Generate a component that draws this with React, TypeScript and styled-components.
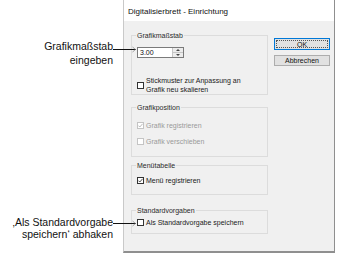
import React from "react";
import styled, { createGlobalStyle } from "styled-components";

const GlobalStyle = createGlobalStyle`
  html, body {
    margin: 0;
    background: #ffffff;
  }
  body {
    font-family: "Liberation Sans", Arial, sans-serif;
  }
`;

const Canvas = styled.div`
  position: relative;
  width: 343px;
  height: 270px;
  display: flex;
  padding-left: 123px;
  box-sizing: border-box;
  overflow: hidden;
`;

const Dialog = styled.div`
  width: 212px;
  height: 253px;
  box-sizing: border-box;
  display: flex;
  flex-direction: column;
  background: #f0f0f0;
  border-left: 1px solid #c9c9c9;
  border-right: 1px solid #8f8f8f;
  border-bottom: 2px solid #8f8f8f;
  font-size: 7px;
  color: #1a1a1a;
`;

const TitleBar = styled.div`
  height: 21px;
  flex: none;
  display: flex;
  align-items: center;
  padding: 2px 0 0 4px;
  box-sizing: border-box;
  background: #ffffff;
  font-size: 8px;
  color: #111;
`;

const Body = styled.div`
  display: flex;
  gap: 6px;
  padding: 0 3px 0 7px;
`;

const LeftColumn = styled.div`
  width: 137px;
  display: flex;
  flex-direction: column;
`;

const Group = styled.div<{ $top: number; $padBottom: number }>`
  margin-top: ${(p) => p.$top}px;
  border: 1px solid #dcdcdc;
  padding: 0 5px ${(p) => p.$padBottom}px 5px;
  display: flex;
  flex-direction: column;
`;

const Legend = styled.div<{ $after: number }>`
  margin: -5px 0 ${(p) => p.$after}px -1px;
  padding: 0 1px;
  width: fit-content;
  line-height: 9px;
  background: #f0f0f0;
  color: #2a2a2a;
`;

const SpinBox = styled.div`
  display: flex;
  width: 47px;
  height: 11px;
  box-sizing: border-box;
  border: 1px solid #7a7a7a;
  background: #ffffff;
`;

const SpinInput = styled.div`
  flex: 1;
  padding-left: 2px;
  line-height: 9px;
  color: #111;
`;

const SpinButtons = styled.div`
  width: 10px;
  display: flex;
  flex-direction: column;
  border-left: 1px solid #c5c5c5;
  background: #ececec;
`;

const SpinHalf = styled.div<{ $down?: boolean }>`
  flex: 1;
  display: flex;
  align-items: center;
  justify-content: center;
  border-top: ${(p) => (p.$down ? "1px solid #c5c5c5" : "none")};
`;

const CheckRow = styled.div<{ $gap?: number }>`
  display: flex;
  align-items: center;
  gap: 2px;
  margin-top: ${(p) => p.$gap ?? 0}px;
`;

const CheckBox = styled.span<{ $disabled?: boolean }>`
  width: 7px;
  height: 7px;
  flex: none;
  box-sizing: border-box;
  border: 1px solid ${(p) => (p.$disabled ? "#c4c4c4" : "#333333")};
  background: #ffffff;
  display: flex;
  align-items: center;
  justify-content: center;
`;

const CheckLabel = styled.span<{ $disabled?: boolean }>`
  line-height: 9px;
  color: ${(p) => (p.$disabled ? "#9a9a9a" : "#1a1a1a")};
`;

const ButtonColumn = styled.div`
  width: 56px;
  padding-top: 17px;
  display: flex;
  flex-direction: column;
  gap: 5px;
`;

const DialogButton = styled.div<{ $default?: boolean }>`
  height: ${(p) => (p.$default ? 12 : 11)}px;
  box-sizing: border-box;
  display: flex;
  align-items: center;
  justify-content: center;
  background: #e1e1e1;
  border: 1px solid ${(p) => (p.$default ? "#0078d7" : "#adadad")};
  color: #111;
  position: relative;
  outline: ${(p) => (p.$default ? "1px dotted #555" : "none")};
  outline-offset: -3px;
`;

const Callout = styled.div<{ $top: number }>`
  position: absolute;
  left: 0;
  top: ${(p) => p.$top}px;
  width: 137px;
  display: flex;
  align-items: flex-start;
  font-family: "Liberation Sans", Arial, sans-serif;
  font-size: 10.5px;
  color: #111;
`;

const CalloutText = styled.div<{ $lineHeight: number }>`
  width: 113px;
  flex: none;
  text-align: right;
  line-height: ${(p) => p.$lineHeight}px;
  white-space: nowrap;
`;

const LeaderWrap = styled.div<{ $offset: number }>`
  margin-top: ${(p) => p.$offset - 3}px;
  flex: 1;
  display: flex;
`;

const Leader = ({ offset }: { offset: number }) => (
  <LeaderWrap $offset={offset}>
    <svg width="24" height="7" viewBox="0 0 24 7">
      <line x1="0" y1="3.5" x2="23" y2="3.5" stroke="#111" strokeWidth="1" />
      <polyline points="19.5,1 22.5,3.5 19.5,6" fill="none" stroke="#8a8a8a" strokeWidth="0.8" />
    </svg>
  </LeaderWrap>
);

const Check = ({ color }: { color: string }) => (
  <svg width="5" height="5" viewBox="0 0 5 5">
    <polyline points="0.4,2.6 1.8,4 4.6,0.8" fill="none" stroke={color} strokeWidth="0.8" />
  </svg>
);

const Arrow = ({ down }: { down?: boolean }) => (
  <svg width="4" height="2" viewBox="0 0 4 2">
    <polygon points={down ? "0,0 4,0 2,2" : "0,2 4,2 2,0"} fill="#444" />
  </svg>
);

export default function App() {
  return (
    <>
      <GlobalStyle />
      <Canvas>
        <Callout $top={39}>
          <CalloutText $lineHeight={14}>
            Grafikmaßstab
            <br />
            eingeben
          </CalloutText>
          <Leader offset={10} />
        </Callout>
        <Callout $top={216}>
          <CalloutText $lineHeight={12}>
            ‚Als Standardvorgabe
            <br />
            speichern‘ abhaken
          </CalloutText>
          <Leader offset={7} />
        </Callout>

        <Dialog>
          <TitleBar>Digitalisierbrett - Einrichtung</TitleBar>
          <Body>
            <LeftColumn>
              <Group $top={14} $padBottom={0}>
                <Legend $after={7}>Grafikmaßstab</Legend>
                <SpinBox>
                  <SpinInput>3.00</SpinInput>
                  <SpinButtons>
                    <SpinHalf>
                      <Arrow />
                    </SpinHalf>
                    <SpinHalf $down>
                      <Arrow down />
                    </SpinHalf>
                  </SpinButtons>
                </SpinBox>
                <CheckRow $gap={18}>
                  <CheckBox />
                  <CheckLabel>
                    Stickmuster zur Anpassung an
                    <br />
                    Grafik neu skalieren
                  </CheckLabel>
                </CheckRow>
              </Group>

              <Group $top={12} $padBottom={10}>
                <Legend $after={9}>Grafikposition</Legend>
                <CheckRow>
                  <CheckBox $disabled>
                    <Check color="#a8a8a8" />
                  </CheckBox>
                  <CheckLabel $disabled>Grafik registrieren</CheckLabel>
                </CheckRow>
                <CheckRow $gap={7}>
                  <CheckBox $disabled />
                  <CheckLabel $disabled>Grafik verschieben</CheckLabel>
                </CheckRow>
              </Group>

              <Group $top={8} $padBottom={9}>
                <Legend $after={6}>Menütabelle</Legend>
                <CheckRow>
                  <CheckBox>
                    <Check color="#222" />
                  </CheckBox>
                  <CheckLabel>Menü registrieren</CheckLabel>
                </CheckRow>
              </Group>

              <Group $top={15} $padBottom={6}>
                <Legend $after={3}>Standardvorgaben</Legend>
                <CheckRow>
                  <CheckBox />
                  <CheckLabel>Als Standardvorgabe speichern</CheckLabel>
                </CheckRow>
              </Group>
            </LeftColumn>

            <ButtonColumn>
              <DialogButton $default>OK</DialogButton>
              <DialogButton>Abbrechen</DialogButton>
            </ButtonColumn>
          </Body>
        </Dialog>
      </Canvas>
    </>
  );
}
